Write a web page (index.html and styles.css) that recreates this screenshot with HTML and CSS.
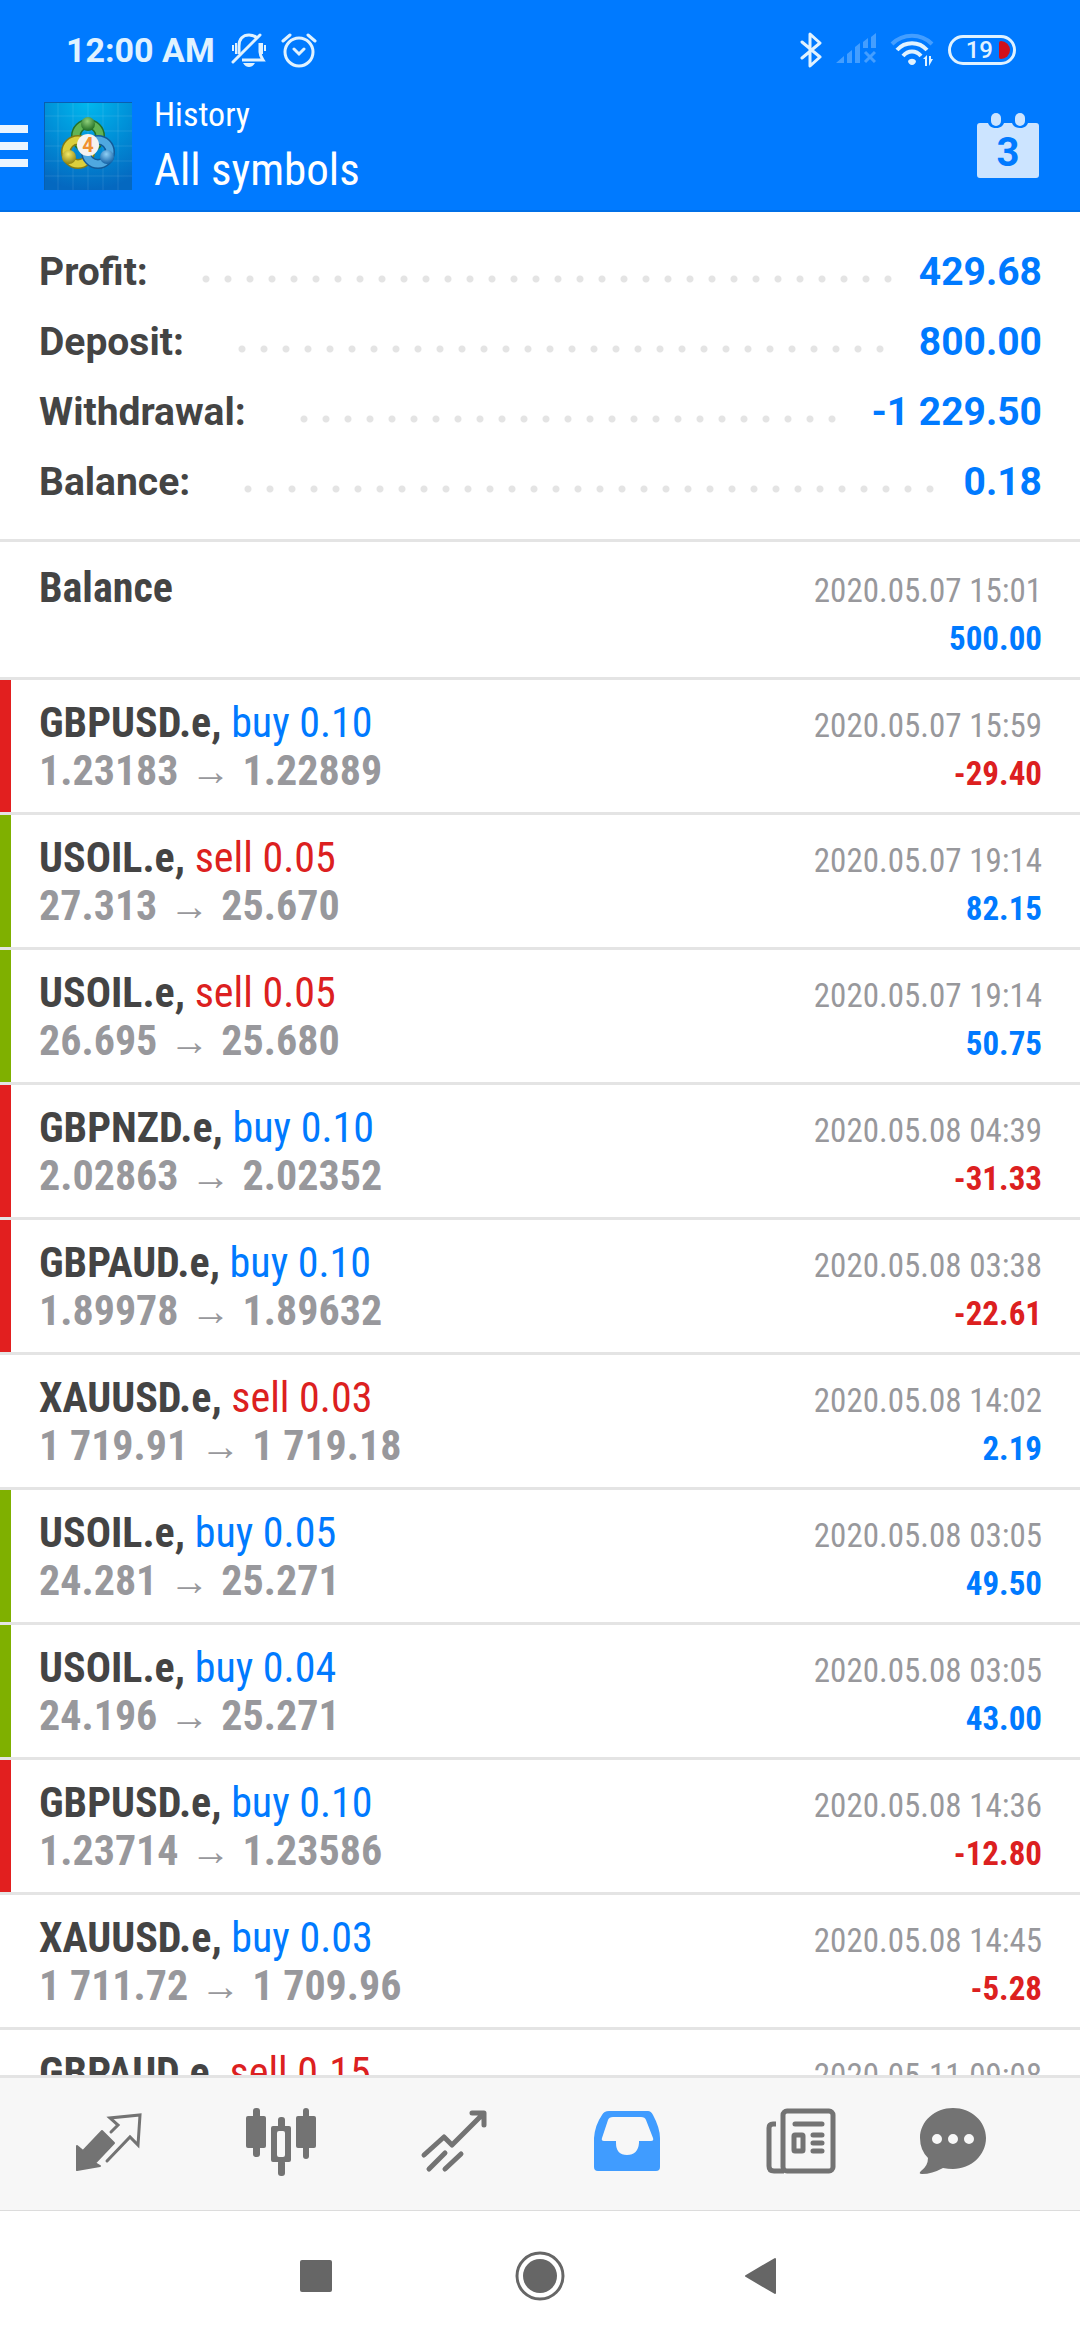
FILE: index.html
```html
<!DOCTYPE html>
<html lang="en">
<head>
<meta charset="utf-8">
<meta name="viewport" content="width=device-width, initial-scale=1">
<title>History</title>
<link rel="stylesheet" href="styles.css">
</head>
<body>
<header class="top">
  <div class="status">
    <span class="clock">12:00 AM</span>
    <svg class="bell" viewBox="0 0 36 36" width="36" height="36" fill="none" stroke="currentColor" stroke-width="3">
      <path d="M8 22V14C8 7 12 3 18 3c4 0 6 1 8 3M29 11v9c0 3 1 5 3 8H11"/>
      <path d="M2 30L29 3" stroke-linecap="round"/>
      <path d="M12 31h12c-2 3-4 4-6 4s-4-1-6-4z" fill="currentColor" stroke="none"/>
      <path d="M2 13v6M5 11v11M31 11v11M34 13v6" stroke-width="2"/>
    </svg>
    <svg class="alarm" viewBox="0 0 36 36" width="36" height="36" fill="none" stroke="currentColor" stroke-width="3" stroke-linecap="round">
      <circle cx="18" cy="20" r="14"/>
      <path d="M13 17l5 5 5-5M2 9l7-6M34 9l-7-6"/>
    </svg>
    <div class="signals">
      <svg viewBox="0 0 22 36" width="22" height="36" fill="none" stroke="currentColor" stroke-width="3" stroke-linejoin="round" stroke-linecap="round">
        <path d="M2 10l18 15-10 9V2l10 9L2 26"/>
      </svg>
      <svg class="faint" viewBox="0 0 40 36" width="40" height="36" fill="currentColor">
        <path d="M0 31l8-7v7zM11 22l5-4v13h-5zM19 15l5-4v20h-5zM27 10l5-4v10h-5zM35 5l5-4v15h-5z"/>
        <path d="M29 20l10 10M39 20L29 30" stroke="currentColor" stroke-width="3"/>
      </svg>
      <svg viewBox="0 0 44 36" width="44" height="36" fill="none" stroke="currentColor" stroke-width="4">
        <path class="faint" d="M2 12c11-11 29-11 40 0"/>
        <path d="M7 18c8-9 22-9 30 0M13 24c5-6 13-6 18 0"/>
        <path d="M18 29c2-3 6-3 8 0 0 2-2 4-4 4s-4-2-4-4z" fill="currentColor" stroke="none"/>
        <path d="M33 27l4-4v11h-2v-7zM43 27l-4 7V24h2v3z" fill="currentColor" stroke="none"/>
      </svg>
      <span class="battery"><span class="charge">19</span><span class="level"></span></span>
    </div>
  </div>
  <div class="bar">
    <button class="menu" aria-label="Menu"><i></i><i></i><i></i></button>
    <svg class="logo" viewBox="0 0 88 88" width="88" height="88" role="img" aria-label="MetaTrader 4">
      <defs>
        <radialGradient id="sky" cx="50%" cy="0%" r="100%"><stop offset="0" stop-color="#00b8ee"/><stop offset=".5" stop-color="#0090d8"/><stop offset="1" stop-color="#0468c0"/></radialGradient>
        <radialGradient id="green" cx="45%" cy="30%" r="70%"><stop offset="0" stop-color="#8fd07a"/><stop offset="1" stop-color="#1d6b22"/></radialGradient>
        <radialGradient id="gold" cx="45%" cy="30%" r="70%"><stop offset="0" stop-color="#f2ea6a"/><stop offset="1" stop-color="#8f8310"/></radialGradient>
        <radialGradient id="blue" cx="45%" cy="30%" r="70%"><stop offset="0" stop-color="#8fd0f6"/><stop offset="1" stop-color="#1261a6"/></radialGradient>
      </defs>
      <path fill="url(#sky)" d="M0 0h88v88H0z"/>
      <path d="M14 0v88M29 0v88M44 0v88M59 0v88M74 0v88M0 14h88M0 29h88M0 44h88M0 59h88M0 74h88" stroke="#fff" stroke-opacity=".1"/>
      <g fill="none" stroke-width="8">
        <circle cx="44" cy="34" r="12" stroke="#23702a" stroke-width="10"/><circle cx="44" cy="34" r="12" stroke="#62b454" stroke-width="7"/>
        <circle cx="34" cy="50" r="12" stroke="#847b14" stroke-width="10"/><circle cx="34" cy="50" r="12" stroke="#dccf3c" stroke-width="7"/>
        <circle cx="54" cy="50" r="12" stroke="#135a98" stroke-width="10"/><circle cx="54" cy="50" r="12" stroke="#4fa8e0" stroke-width="7"/>
      </g>
      <circle cx="44" cy="22" r="7" fill="url(#green)"/>
      <circle cx="25" cy="55" r="7" fill="url(#gold)"/>
      <circle cx="63" cy="55" r="7" fill="url(#blue)"/>
      <circle cx="44" cy="43" r="11" fill="#f5f2f0"/>
      <text class="four" x="44" y="50" text-anchor="middle">4</text>
      <path d="M0 .5h88M.5 0v88" stroke="#0a5fae"/>
    </svg>
    <div class="titles">
      <p class="section">History</p>
      <h1 class="title">All symbols</h1>
    </div>
    <button class="calendar" aria-label="Choose period">
      <svg viewBox="0 0 64 66" width="64" height="66">
        <path fill="#cce4ff" d="M4 10h8c1 3 4 5 8 5s7-2 8-5h8c1 3 4 5 8 5s7-2 8-5h8c2 0 3 1 3 3v49c0 2-1 3-3 3H4c-2 0-3-1-3-3V13c0-2 1-3 3-3z"/>
        <rect x="15" y="0" width="10" height="13" rx="5" fill="#cce4ff"/>
        <rect x="39" y="0" width="10" height="13" rx="5" fill="#cce4ff"/>
        <text class="day" x="32" y="53" text-anchor="middle">3</text>
      </svg>
    </button>
  </div>
</header>

<main class="content">
  <dl class="summary">
    <div class="total"><dt>Profit:</dt><dd class="dots"></dd><dd class="sum">429.68</dd></div>
    <div class="total"><dt>Deposit:</dt><dd class="dots"></dd><dd class="sum">800.00</dd></div>
    <div class="total"><dt>Withdrawal:</dt><dd class="dots"></dd><dd class="sum">-1 229.50</dd></div>
    <div class="total"><dt>Balance:</dt><dd class="dots"></dd><dd class="sum">0.18</dd></div>
  </dl>
  <ul class="deals">
    <li class="deal operation"><span class="name">Balance</span><time>2020.05.07 15:01</time><span class="amount plus">500.00</span></li>
    <li class="deal stop"><span class="name">GBPUSD.e, <span class="buy">buy 0.10</span></span><time>2020.05.07 15:59</time><span class="prices">1.23183<span class="arrow">→</span>1.22889</span><span class="amount minus">-29.40</span></li>
    <li class="deal take"><span class="name">USOIL.e, <span class="sell">sell 0.05</span></span><time>2020.05.07 19:14</time><span class="prices">27.313<span class="arrow">→</span>25.670</span><span class="amount plus">82.15</span></li>
    <li class="deal take"><span class="name">USOIL.e, <span class="sell">sell 0.05</span></span><time>2020.05.07 19:14</time><span class="prices">26.695<span class="arrow">→</span>25.680</span><span class="amount plus">50.75</span></li>
    <li class="deal stop"><span class="name">GBPNZD.e, <span class="buy">buy 0.10</span></span><time>2020.05.08 04:39</time><span class="prices">2.02863<span class="arrow">→</span>2.02352</span><span class="amount minus">-31.33</span></li>
    <li class="deal stop"><span class="name">GBPAUD.e, <span class="buy">buy 0.10</span></span><time>2020.05.08 03:38</time><span class="prices">1.89978<span class="arrow">→</span>1.89632</span><span class="amount minus">-22.61</span></li>
    <li class="deal"><span class="name">XAUUSD.e, <span class="sell">sell 0.03</span></span><time>2020.05.08 14:02</time><span class="prices">1 719.91<span class="arrow">→</span>1 719.18</span><span class="amount plus">2.19</span></li>
    <li class="deal take"><span class="name">USOIL.e, <span class="buy">buy 0.05</span></span><time>2020.05.08 03:05</time><span class="prices">24.281<span class="arrow">→</span>25.271</span><span class="amount plus">49.50</span></li>
    <li class="deal take"><span class="name">USOIL.e, <span class="buy">buy 0.04</span></span><time>2020.05.08 03:05</time><span class="prices">24.196<span class="arrow">→</span>25.271</span><span class="amount plus">43.00</span></li>
    <li class="deal stop"><span class="name">GBPUSD.e, <span class="buy">buy 0.10</span></span><time>2020.05.08 14:36</time><span class="prices">1.23714<span class="arrow">→</span>1.23586</span><span class="amount minus">-12.80</span></li>
    <li class="deal"><span class="name">XAUUSD.e, <span class="buy">buy 0.03</span></span><time>2020.05.08 14:45</time><span class="prices">1 711.72<span class="arrow">→</span>1 709.96</span><span class="amount minus">-5.28</span></li>
    <li class="deal"><span class="name">GBPAUD.e, <span class="sell">sell 0.15</span></span><time>2020.05.11 09:08</time></li>
  </ul>
</main>

<nav class="tabs">
  <button aria-label="Quotes">
    <svg viewBox="0 0 72 72" width="72" height="72" fill="currentColor">
      <path d="M5 38l6 5 19-20 12 12-19 20 5 3-23 4z" stroke="currentColor" stroke-width="2" stroke-linejoin="round"/>
      <path d="M39 24l7-7-8-7 30-3-2 30-8-8-23 24" fill="none" stroke="currentColor" stroke-width="3" stroke-linecap="round"/>
    </svg>
  </button>
  <button aria-label="Chart">
    <svg viewBox="0 0 72 72" width="72" height="72" fill="currentColor">
      <rect x="1" y="8" width="20" height="32" rx="2"/><rect x="8" y="0" width="7" height="49" rx="3"/>
      <path fill-rule="evenodd" d="M28 18h16q2 0 2 2v32q0 2-2 2H28q-2 0-2-2V20q0-2 2-2zm6 5q-2 0-2 2v22q0 2 2 2h4q2 0 2-2V25q0-2-2-2z"/>
      <rect x="33" y="9" width="7" height="12" rx="3"/><rect x="33" y="52" width="7" height="16" rx="3"/>
      <rect x="51" y="8" width="20" height="32" rx="2"/><rect x="58" y="0" width="6" height="51" rx="3"/>
    </svg>
  </button>
  <button aria-label="Trade">
    <svg viewBox="0 0 72 72" width="72" height="72" fill="none" stroke="currentColor" stroke-width="5" stroke-linecap="round" stroke-linejoin="round">
      <path d="M6 47l20-18 8 8L65 6M54 5h12v12M11 61l16-16M27 61l16-15"/>
    </svg>
  </button>
  <button class="current" aria-label="History">
    <svg viewBox="0 0 72 72" width="72" height="72" fill="currentColor">
      <path fill-rule="evenodd" d="M18 3h39q3 0 5 4 7 13 7 23v29q0 4-4 4H7q-4 0-4-4V30Q4 17 11 7q2-4 7-4zm4 6q-4 0-5 3l-6 18q-1 3 2 3h12v2q0 12 11 12t12-12v-2h12q3 0 2-3l-7-18q-1-3-5-3z"/>
    </svg>
  </button>
  <button aria-label="News">
    <svg viewBox="0 0 72 72" width="72" height="72" fill="none" stroke="currentColor" stroke-width="5">
      <rect x="19" y="3" width="50" height="60" rx="4"/>
      <path d="M12 16H9q-4 0-4 4v38q0 5 5 5h10"/>
      <path d="M31 16h27M49 27h9M49 35h9M49 43h9" stroke-linecap="round"/>
      <rect x="30" y="27" width="9" height="16" rx="1"/>
    </svg>
  </button>
  <button aria-label="Chat">
    <svg viewBox="0 0 72 72" width="72" height="72" fill="currentColor">
      <path fill-rule="evenodd" d="M37 0c18 0 33 13 33 30S55 61 37 61q-5 0-10-1-11 6-21 6-4 0-1-3 7-5 7-13Q4 42 4 30C4 13 19 0 37 0zM21 26a5 5 0 100 10 5 5 0 000-10zm16 0a5 5 0 100 10 5 5 0 000-10zm16 0a5 5 0 100 10 5 5 0 000-10z"/>
    </svg>
  </button>
</nav>

<nav class="system">
  <button aria-label="Recent apps"><svg viewBox="0 0 50 50" width="50" height="50" fill="currentColor"><rect x="7" y="9" width="32" height="32" rx="2"/></svg></button>
  <button aria-label="Home"><svg viewBox="0 0 50 50" width="50" height="50" fill="currentColor"><circle cx="25" cy="25" r="17"/><circle cx="25" cy="25" r="23" fill="none" stroke="currentColor" stroke-width="3"/></svg></button>
  <button aria-label="Back"><svg viewBox="0 0 50 50" width="50" height="50" fill="currentColor"><path d="M9 25L38 8v34z" stroke="currentColor" stroke-width="2" stroke-linejoin="round"/></svg></button>
</nav>
</body>
</html>
```
FILE: styles.css
```css
* { box-sizing: border-box; }

body {
  margin: 0;
  height: 100vh;
  display: flex;
  flex-direction: column;
  background: #fff;
  color: #444;
  font-family: "Roboto Condensed", Roboto, sans-serif;
  font-size: 42px;
  line-height: 48px;
}

h1, p, dl, dd, ul { margin: 0; padding: 0; }

button {
  padding: 0;
  border: 0;
  background: none;
  color: inherit;
  cursor: pointer;
}

svg { display: block; }

/* Header */
.top {
  flex: none;
  background: #007aff;
  border-bottom: 2px solid #0070e8;
  color: #fff;
}

.status {
  display: flex;
  align-items: center;
  padding: 32px 64px 0 66px;
  height: 68px;
  color: #e0f2ff;
}

.clock {
  font: 700 34px/36px Roboto, sans-serif;
}

.bell { margin-left: 16px; }
.alarm { margin-left: 14px; }

.signals {
  display: flex;
  align-items: center;
  gap: 14px;
  margin-left: auto;
}

.faint { opacity: .3; }

.battery {
  display: flex;
  align-items: center;
  justify-content: flex-end;
  gap: 6px;
  width: 68px;
  height: 30px;
  padding-right: 3px;
  border: 3px solid currentColor;
  border-radius: 15px;
}

.charge {
  font: 500 24px/24px Roboto, sans-serif;
}

.level {
  width: 11px;
  height: 18px;
  border-radius: 2px 9px 9px 2px;
  background: #d0101c;
}

.bar {
  display: flex;
  align-items: center;
  height: 142px;
  padding: 14px 40px 0 0;
}

.menu {
  display: grid;
  gap: 9px;
  width: 28px;
  margin-right: 16px;
}

.menu i {
  height: 8px;
  background: #ebf5ff;
}

.four {
  font: 700 20px Roboto, sans-serif;
  fill: #f09030;
}

.titles {
  flex: 1;
  margin-left: 22px;
}

.section {
  font-size: 34px;
  line-height: 48px;
}

.title {
  font-size: 45px;
  font-weight: 400;
  line-height: 64px;
}

.day {
  font: 700 40px Roboto, sans-serif;
  fill: #007aff;
}

/* Totals */
.content {
  flex: 1;
  min-height: 0;
  overflow: hidden;
}

.summary {
  padding: 25px 38px 22px 39px;
  border-bottom: 3px solid #e4e4e4;
  font: 700 39px/70px Roboto, sans-serif;
}

.total { display: flex; }

.dots {
  flex: 1;
  margin: 0 8px 0 54px;
}

/* Only whole 22px steps are drawn, so no dot is cut off before the sum */
.dots::before {
  content: "";
  display: block;
  width: round(down, 100%, 22px);
  height: 70px;
  background: radial-gradient(circle at 4px 42px, #e4e4e4 3px, transparent 4px) 0 0 / 22px 70px repeat-x;
}

.sum { color: #007aff; }

/* Deals */
.deals { list-style: none; }

.deal {
  display: grid;
  grid-template-columns: 1fr auto;
  grid-template-rows: 48px 48px;
  padding: 19px 38px 17px 39px;
  border-bottom: 3px solid #e4e4e4;
}

.operation { padding-top: 22px; }
.stop { box-shadow: inset 11px 0 #e21f1f; }
.take { box-shadow: inset 11px 0 #7fb000; }

.name, .prices, .amount { font-weight: 700; }

.buy, .sell { font-weight: 400; }
.buy, .plus { color: #007aff; }
.sell, .minus { color: #dc2020; }

.prices { color: #98989c; }

.arrow {
  margin: 0 12px;
  font: 400 40px/40px "Liberation Sans", sans-serif;
}

time, .amount {
  font-size: 33px;
  line-height: 54px;
  text-align: right;
}

time { color: #98989c; }

.amount { grid-column: 2; }

/* Bottom bars */
.tabs {
  flex: none;
  display: grid;
  grid-template-columns: repeat(5, 1fr) 132px;
  justify-items: center;
  align-items: center;
  height: 136px;
  padding: 0 62px 0 22px;
  border-top: 3px solid #e4e4e4;
  border-bottom: 1px solid #dcdcdc;
  background: #f7f7f7;
  color: #737373;
}

.current { color: #409cff; }

.system {
  flex: none;
  display: flex;
  justify-content: center;
  align-items: center;
  gap: 172px;
  height: 129px;
  color: #666;
}
```
